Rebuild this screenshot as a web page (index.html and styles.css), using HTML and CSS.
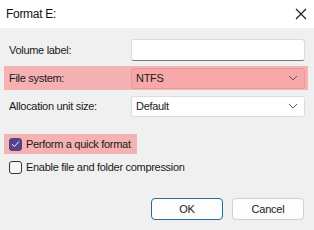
FILE: index.html
```html
<!DOCTYPE html>
<html lang="en">
<head>
<meta charset="UTF-8">
<title>Format E:</title>
<link rel="stylesheet" href="styles.css">
</head>
<body>

<div class="titlebar">
    <span class="title">Format E:</span>
    <svg class="close" width="12" height="12" viewBox="0 0 12 12"><path d="M1 1L11 11M11 1L1 11" stroke="#1a1a1a" stroke-width="1.1" fill="none"/></svg>
</div>

<div class="content">
    <div class="row">
        <label class="label">Volume label:</label>
        <div class="field textbox"></div>
    </div>
    <div class="row marked">
        <label class="label">File system:</label>
        <div class="field combo">NTFS
            <svg class="chev" width="10" height="6" viewBox="0 0 10 6"><path d="M1 1L5 5L9 1" stroke="#6a5050" stroke-width="1" fill="none"/></svg>
        </div>
    </div>
    <div class="row">
        <label class="label">Allocation unit size:</label>
        <div class="field combo">Default
            <svg class="chev" width="10" height="6" viewBox="0 0 10 6"><path d="M1 1L5 5L9 1" stroke="#555" stroke-width="1" fill="none"/></svg>
        </div>
    </div>

    <div class="checks">
        <div class="check marked">
            <span class="box checked"><svg width="9" height="8" viewBox="0 0 9 8"><path d="M1 4.2L3.4 6.5L8 1.5" stroke="#fff" stroke-width="1" fill="none"/></svg></span>
            Perform a quick format
        </div>
        <div class="check">
            <span class="box"></span>
            Enable file and folder compression
        </div>
    </div>

    <div class="buttons">
        <button class="button default">OK</button>
        <button class="button">Cancel</button>
    </div>
</div>

</body>
</html>
```

FILE: styles.css
```css
body {
    margin: 0;
    width: 314px;
    height: 230px;
    overflow: hidden;
    background-color: #f0f0f0;
    font-family: "Liberation Sans", Arial, sans-serif;
    font-size: 11px;
    letter-spacing: -0.3px;
    color: #1a1a1a;
}
.titlebar {
    height: 28px;
    background-color: #fff;
    display: flex;
    align-items: center;
    justify-content: space-between;
    padding: 0 7px 0 6px;
}
.title {
    font-size: 12px;
    color: #111;
}
.content {
    padding: 10px 6px 0 4px;
}
.row {
    display: flex;
    align-items: center;
    height: 24px;
    padding: 0 3px 0 5px;
    margin-bottom: 4px;
}
.label {
    width: 122px;
}
.field {
    width: 174px;
    height: 21px;
    box-sizing: border-box;
    border: 1px solid #dcdcdc;
    border-radius: 3px;
    background-color: #fff;
}
.textbox {
    height: 22px;
    border-bottom: 1px solid #7a7a7a;
}
.combo {
    display: flex;
    align-items: center;
    justify-content: space-between;
    padding: 0 6px 0 4px;
}
.marked {
    background-color: #f5b2b2;
}
.marked .field {
    background-color: #f7a9a9;
    border-color: #ea9a9a;
}
.checks {
    display: flex;
    flex-direction: column;
    align-items: flex-start;
    gap: 3px;
    margin-top: 16px;
}
.check {
    display: flex;
    align-items: center;
    height: 20px;
    padding: 0 6px 0 5px;
}
.box {
    width: 13px;
    height: 13px;
    box-sizing: border-box;
    border: 1px solid #333;
    border-radius: 3px;
    background-color: #f6f6f6;
    margin-right: 4px;
    display: flex;
    align-items: center;
    justify-content: center;
}
.box.checked {
    background-color: #55428a;
    border-color: #55428a;
}
.buttons {
    display: flex;
    justify-content: flex-end;
    gap: 9px;
    margin-top: 21px;
    padding-right: 4px;
}
.button {
    width: 72px;
    height: 22px;
    font-family: "Liberation Sans", Arial, sans-serif;
    font-size: 11px;
    letter-spacing: -0.2px;
    color: #1a1a1a;
    background-color: #fdfdfd;
    border: 1px solid #d0d0d0;
    border-radius: 4px;
    padding: 0;
}
.button.default {
    border-color: #2a6a96;
}
```
